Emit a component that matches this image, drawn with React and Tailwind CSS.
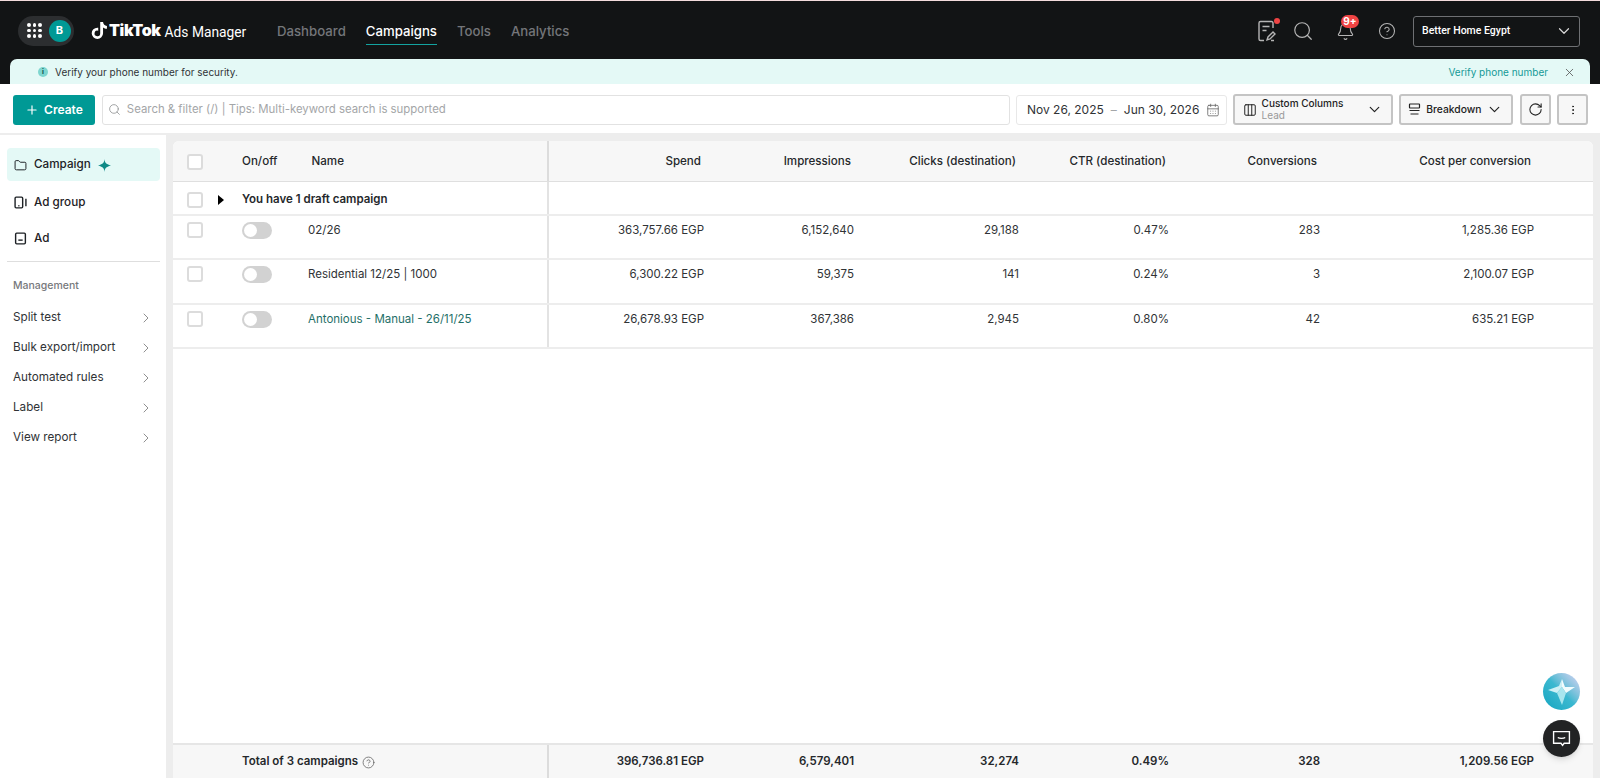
import { ChevronDown, ChevronRight, X, Plus, Search, RotateCw, MoreVertical, CircleHelp, Bell, CalendarDays, Columns3, Folder } from "lucide-react";

const columns = ["w-[158px]", "w-[150px]", "w-[165px]", "w-[150px]", "w-[151px]", "w-[214px]"];
const headers = ["Spend", "Impressions", "Clicks (destination)", "CTR (destination)", "Conversions", "Cost per conversion"];

const rows = [
  { name: "02/26", values: ["363,757.66 EGP", "6,152,640", "29,188", "0.47%", "283", "1,285.36 EGP"] },
  { name: "Residential 12/25 | 1000", values: ["6,300.22 EGP", "59,375", "141", "0.24%", "3", "2,100.07 EGP"] },
  { name: "Antonious - Manual - 26/11/25", link: true, values: ["26,678.93 EGP", "367,386", "2,945", "0.80%", "42", "635.21 EGP"] },
];

const totals = ["396,736.81 EGP", "6,579,401", "32,274", "0.49%", "328", "1,209.56 EGP"];
const managementItems = ["Split test", "Bulk export/import", "Automated rules", "Label", "View report"];

function Checkbox() {
  return <div className="w-[16px] h-[16px] rounded-[3px] border-2 border-[#dcdcdc] bg-white shrink-0" />;
}

function Toggle() {
  return (
    <div className="w-[30px] h-[17px] rounded-full bg-[#d2d2d2] p-[2px] shrink-0">
      <div className="w-[13px] h-[13px] rounded-full bg-white" />
    </div>
  );
}

function TikTokNote() {
  return (
    <svg width="17" height="19" viewBox="0 0 24 26" fill="#fff">
      <path d="M13 1h4c.3 3 2.300 5.200 5.500 5.500v4c-2.100 0-4-.7-5.500-1.800V17a8 8 0 1 1-8-8c.4 0 .8 0 1.200.1v4.200A4 4 0 1 0 13 17V1z" />
    </svg>
  );
}

function Header() {
  return (
    <div className="bg-[#121415] border-t border-[#f3dcdc] h-[84px] shrink-0">
      <div className="h-[58px] flex items-center pl-[18px] pr-[20px] pt-[2px]">
        <div className="w-[56px] h-[30px] rounded-full bg-[#2c2e30] flex items-center pl-[9px] gap-[7px] -mt-[1px]">
          <div className="grid grid-cols-3 gap-[2px]">
            {[0, 1, 2, 3, 4, 5, 6, 7, 8].map((i) => (
              <div key={i} className="w-[3.500px] h-[3.500px] rounded-full bg-white" />
            ))}
          </div>
          <div className="w-[22px] h-[22px] rounded-full bg-[#009995] flex items-center justify-center text-white text-[11px] font-bold">B</div>
        </div>
        <div className="flex items-center ml-[17px] w-[186px] -mt-[2px]">
          <TikTokNote />
          <span className="text-white text-[16px] font-black tracking-[-0.4px] ml-[1px]">TikTok</span>
          <span className="text-white text-[13.800px] ml-[4px] mt-[5px] font-[Roboto,sans-serif]">Ads Manager</span>
        </div>
        <nav className="flex items-center gap-[20px] text-[13.200px] font-medium text-[#74767a] mt-[1px]">
          <span>Dashboard</span>
          <span className="relative text-white">
            Campaigns
            <span className="absolute left-0 right-0 -bottom-[4px] h-[1.500px] bg-[#13a3a0]" />
          </span>
          <span>Tools</span>
          <span>Analytics</span>
        </nav>
        <div className="ml-auto flex items-center">
          <div className="relative mr-[15px]">
            <svg width="20" height="22" viewBox="0 0 20 22" fill="none" stroke="#b5b5b5" strokeWidth="1.400">
              <path d="M16 8V3a1.500 1.500 0 0 0-1.500-1.500h-11A1.500 1.500 0 0 0 2 3v16a1.500 1.500 0 0 0 1.500 1.500H7" />
              <path d="M5.500 6.500h7M5.500 10.500h4M10 20l1-3 5-5 2 2-5 5-3 1zM14 20.500h3" />
            </svg>
            <span className="absolute -top-[2px] -right-[3px] w-[6px] h-[6px] rounded-full bg-[#ef4444]" />
          </div>
          <Search size={22} strokeWidth={1.300} className="text-[#b5b5b5] mr-[22px]" />
          <div className="relative mr-[23px]">
            <Bell size={19} strokeWidth={1.400} className="text-[#b5b5b5]" />
            <span className="absolute -top-[7px] left-[5px] w-[18px] h-[13px] rounded-full bg-[#ef4444] text-white text-[10px] font-bold leading-[13px] text-center">9+</span>
          </div>
          <CircleHelp size={18} strokeWidth={1.400} className="text-[#b5b5b5] mr-[17px]" />
          <div className="w-[167px] h-[31px] rounded-[3px] border border-[#6e7073] flex items-center justify-between pl-[8px] pr-[6px] text-white text-[10.500px] font-medium font-[Roboto,sans-serif]">
            Better Home Egypt
            <ChevronDown size={18} strokeWidth={1.600} className="text-[#d8d8d8]" />
          </div>
        </div>
      </div>
      <div className="mx-[10px] h-[26px] rounded-t-[7px] bg-[#e4f9f6] flex items-center pl-[28px] pr-[14px] text-[10px] text-[#303336]">
        <div className="w-[10px] h-[10px] rounded-full bg-[#7ed6cf] flex items-center justify-center text-[#0a4b48] text-[7px] font-bold mr-[7px]">i</div>
        <span>Verify your phone number for security.</span>
        <span className="ml-auto text-[#159a96] mr-[15px]">Verify phone number</span>
        <X size={13} strokeWidth={1.500} className="text-[#555]" />
      </div>
    </div>
  );
}

function Toolbar() {
  return (
    <div className="h-[51px] shrink-0 bg-white flex items-center pl-[13px] pr-[12px] border-b-2 border-[#ededed] pt-[2px]">
      <div className="w-[82px] h-[30px] rounded-[3px] bg-[#009995] text-white text-[12px] font-semibold flex items-center justify-center gap-[5px]">
        <Plus size={14} strokeWidth={2} />
        Create
      </div>
      <div className="ml-[7px] w-[910px] h-[30px] rounded-[3px] border border-[#e2e2e2] flex items-center pl-[5px] text-[11.400px] text-[#a4a6a8]">
        <Search size={13} strokeWidth={1.500} className="text-[#8f9193] mr-[6px]" />
        Search & filter (/) | Tips: Multi-keyword search is supported
      </div>
      <div className="ml-[6px] w-[211px] h-[30px] rounded-[3px] border border-[#e8e8e8] flex items-center pl-[10px] text-[12px] text-[#303336] whitespace-nowrap">
        Nov 26, 2025
        <span className="mx-[7px] text-[#a4a6a8]">–</span>
        Jun 30, 2026
        <CalendarDays size={14} strokeWidth={1.400} className="text-[#666] ml-[7px] shrink-0" />
      </div>
      <div className="ml-[6px] w-[161px] h-[31px] rounded-[3px] border-2 border-[#c4c4c4] bg-[#f7f7f7] flex items-center pl-[8px] pr-[8px]">
        <Columns3 size={14} strokeWidth={1.700} className="text-[#222] mr-[5px]" />
        <div className="flex flex-col leading-[12px] pb-[1px]">
          <span className="text-[10px] font-medium text-[#222]">Custom Columns</span>
          <span className="text-[10px] text-[#999]">Lead</span>
        </div>
        <ChevronDown size={17} strokeWidth={1.700} className="text-[#222] ml-auto" />
      </div>
      <div className="ml-[6px] w-[114px] h-[31px] rounded-[3px] border-2 border-[#c4c4c4] bg-[#f7f7f7] flex items-center pl-[7px] pr-[8px] text-[10.300px] font-medium text-[#222]">
        <svg width="13" height="13" viewBox="0 0 13 13" fill="none" stroke="#222" strokeWidth="1.200" className="mr-[5px]">
          <rect x="1.500" y="1" width="10" height="4" rx="0.500" />
          <path d="M1.500 7.500h10M2.500 11h8" />
        </svg>
        Breakdown
        <ChevronDown size={17} strokeWidth={1.700} className="ml-auto" />
      </div>
      <div className="ml-[7px] w-[31px] h-[31px] rounded-[3px] border-2 border-[#c4c4c4] bg-[#f7f7f7] flex items-center justify-center">
        <RotateCw size={15} strokeWidth={1.700} className="text-[#222]" />
      </div>
      <div className="ml-[6px] w-[31px] h-[31px] rounded-[3px] border-2 border-[#c4c4c4] bg-[#f7f7f7] flex items-center justify-center">
        <MoreVertical size={12} strokeWidth={2} className="text-[#222]" />
      </div>
    </div>
  );
}

function Sidebar() {
  return (
    <aside className="w-[166px] shrink-0 bg-white pt-[13px] pl-[7px] pr-[6px] text-[11.700px]">
      <div className="h-[33px] rounded-[4px] bg-[#e4f9f6] flex items-center pl-[7px] pt-[1px] font-medium text-[#1d2125]">
        <Folder size={13} strokeWidth={1.800} className="mr-[7px]" />
        Campaign
        <svg width="13" height="13" viewBox="0 0 12 12" fill="#0f8a86" className="ml-[7px]">
          <path d="M6 0c.3 3.200 1 4.500 6 6-5 1.500-5.700 2.800-6 6-.3-3.200-1-4.500-6-6 5-1.500 5.700-2.800 6-6z" />
        </svg>
      </div>
      <div className="h-[36px] mt-[2px] pt-[3px] flex items-center pl-[7px] font-medium text-[#1d2125]">
        <svg width="13" height="13" viewBox="0 0 12 12" fill="none" stroke="#1d2125" strokeWidth="1.300" className="mr-[7px]">
          <rect x="1" y="1" width="7" height="10" rx="1" />
          <path d="M11 2.500v7M4 9h1" />
        </svg>
        Ad group
      </div>
      <div className="h-[36px] pt-[3px] flex items-center pl-[7px] font-medium text-[#1d2125]">
        <svg width="13" height="13" viewBox="0 0 12 12" fill="none" stroke="#1d2125" strokeWidth="1.300" className="mr-[7px]">
          <rect x="1.500" y="1" width="9" height="10" rx="1" />
          <path d="M4 7.500h4" />
        </svg>
        Ad
      </div>
      <div className="h-[1px] bg-[#dedede] mt-[6px]" />
      <div className="mt-[16px] text-[10.500px] font-medium text-[#77797c] pl-[6px]">Management</div>
      <div className="mt-[9px]">
        {managementItems.map((item) => (
          <div key={item} className="h-[30px] flex items-center justify-between pl-[6px] pr-[6px] text-[#303336]">
            {item}
            <ChevronRight size={16} strokeWidth={1.100} className="text-[#666]" />
          </div>
        ))}
      </div>
    </aside>
  );
}

function TableRow({ row }) {
  return (
    <div className="h-[44.400px] flex border-b-2 border-[#ededed] text-[11.500px] text-[#303336]">
      <div className="w-[376px] shrink-0 border-r-2 border-[#e3e3e3] flex items-start pt-[6px] pl-[14px]">
        <Checkbox />
        <div className="ml-[39px]"><Toggle /></div>
        <span className={`ml-[36px] ${row.link ? "text-[#1f6f68]" : ""}`}>{row.name}</span>
      </div>
      {row.values.map((value, i) => (
        <div key={i} className={`${columns[i]} shrink-0 text-right pr-[3px] pt-[6px]`}>{value}</div>
      ))}
    </div>
  );
}

function Table() {
  return (
    <main className="flex-1 flex flex-col bg-white rounded-t-[6px] min-w-0">
      <div className="h-[41px] shrink-0 flex bg-[#f7f7f7] border-b border-[#dfdfdf] rounded-t-[6px] text-[11.600px] font-medium text-[#25282b]">
        <div className="w-[376px] shrink-0 border-r-2 border-[#dcdcdc] flex items-center pl-[14px] pt-[2px]">
          <Checkbox />
          <span className="ml-[39px]">On/off</span>
          <span className="ml-[34px]">Name</span>
        </div>
        {headers.map((header, i) => (
          <div key={header} className={`${columns[i]} shrink-0 flex items-center justify-end pr-[6px] pt-[2px]`}>{header}</div>
        ))}
      </div>
      <div className="h-[34px] shrink-0 flex border-b-2 border-[#ededed]">
        <div className="w-[376px] shrink-0 border-r-2 border-[#e3e3e3] flex items-center pl-[14px] pt-[3px] text-[11.500px] font-semibold text-[#25282b]">
          <Checkbox />
          <span className="ml-[15px] w-0 h-0 border-y-[5px] border-y-transparent border-l-[6px] border-l-black" />
          <span className="ml-[18px]">You have 1 draft campaign</span>
        </div>
      </div>
      {rows.map((row) => <TableRow key={row.name} row={row} />)}
      <div className="flex-1" />
      <div className="h-[35px] shrink-0 flex bg-[#f7f7f7] border-t-2 border-[#e6e6e6] text-[11.500px] font-semibold text-[#25282b]">
        <div className="w-[376px] shrink-0 border-r-2 border-[#dcdcdc] flex items-center pl-[69px] pt-[1px]">
          Total of 3 campaigns
          <CircleHelp size={13} strokeWidth={1.500} className="text-[#666] ml-[4px]" />
        </div>
        {totals.map((value, i) => (
          <div key={i} className={`${columns[i]} shrink-0 flex items-center justify-end pr-[3px] pt-[1px]`}>{value}</div>
        ))}
      </div>
    </main>
  );
}

export default function App() {
  return (
    <div className="relative h-[778px] w-[1600px] overflow-hidden flex flex-col bg-[#ededed] font-[Inter,sans-serif]">
      <Header />
      <Toolbar />
      <div className="flex-1 flex min-h-0">
        <Sidebar />
        <div className="flex-1 flex pl-[7px] pr-[7px] pt-[6px] min-w-0">
          <Table />
        </div>
      </div>
      {/* floating assistant + chat buttons */}
      <div className="absolute left-[1543px] top-[673px] w-[37px] h-[37px] rounded-full bg-linear-to-tr from-[#08a5c0] via-[#3bb8d0] to-[#d9d4f5]">
        <svg width="37" height="37" viewBox="0 0 37 37">
          <path d="M19 6l3 8 10 0-9 6-4-6z" fill="#f2fcfd" />
          <path d="M19 6l-3 7-11 4 9 3 5-6z" fill="#cdf0f5" />
          <path d="M14 20l5 12 4-12-4-6z" fill="#a8e6ee" />
        </svg>
      </div>
      <div className="absolute left-[1543px] top-[720px] w-[37px] h-[37px] rounded-full bg-[#222324] flex items-center justify-center shadow-md">
        <svg width="19" height="19" viewBox="0 0 18 18" fill="none" stroke="#fff" strokeWidth="1.300">
          <path d="M1.500 2.500h15v11h-5l-1.500 2-1.500-2h-7z" />
          <path d="M5.500 8c1.500 1.200 5.500 1.200 7 0" />
        </svg>
      </div>
    </div>
  );
}
